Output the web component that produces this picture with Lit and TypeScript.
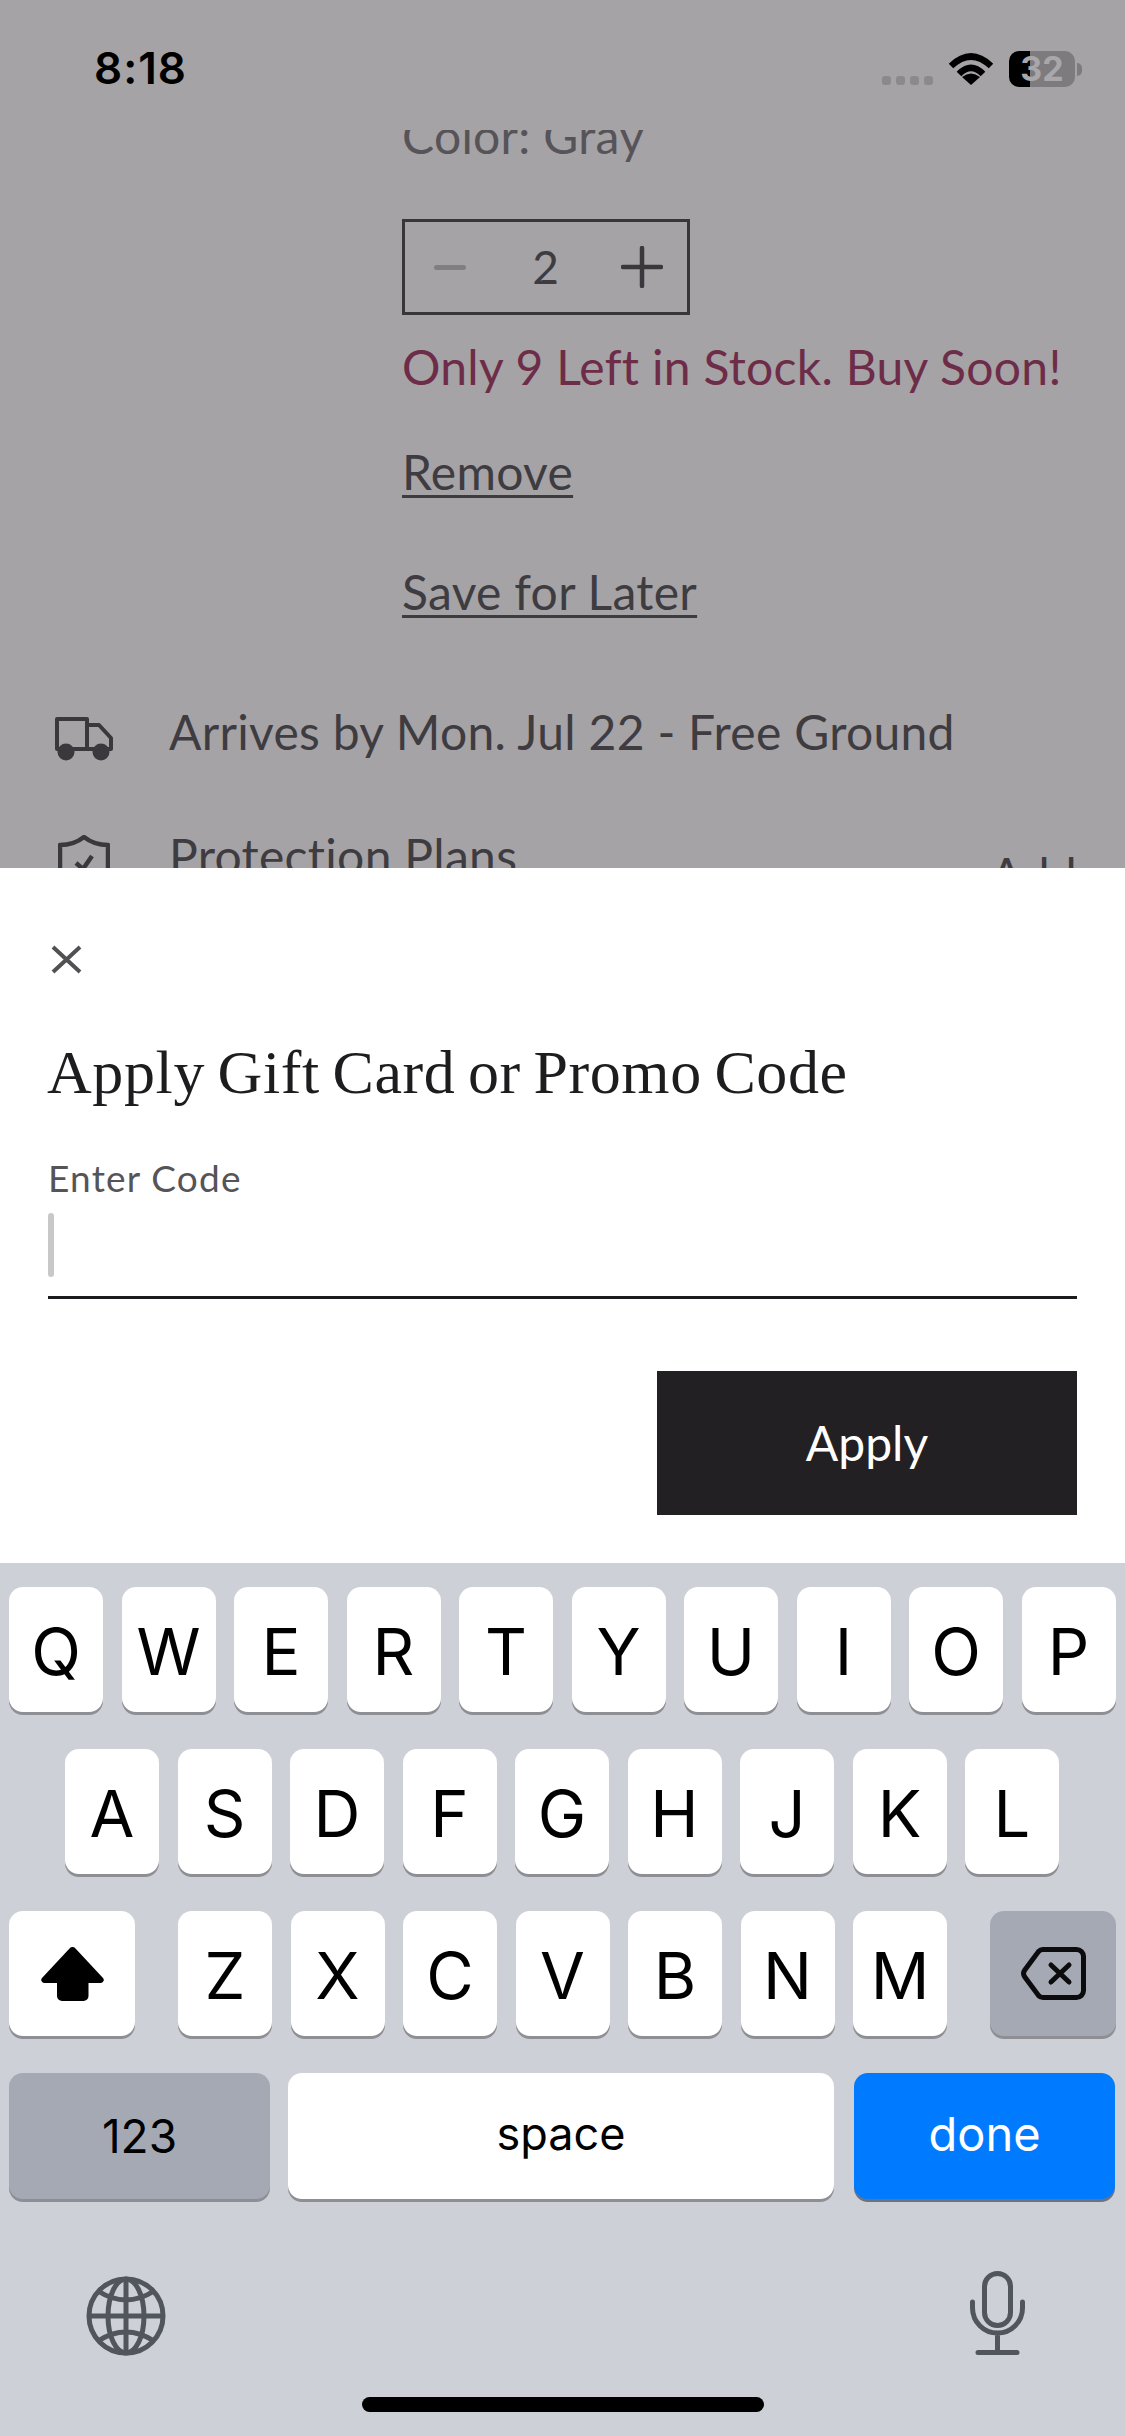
import {LitElement, html, css, svg} from 'lit';
import {customElement} from 'lit/decorators.js';

const ROW_1 = ['Q', 'W', 'E', 'R', 'T', 'Y', 'U', 'I', 'O', 'P'];
const ROW_2 = ['A', 'S', 'D', 'F', 'G', 'H', 'J', 'K', 'L'];
const ROW_3 = ['Z', 'X', 'C', 'V', 'B', 'N', 'M'];

const wifiIcon = svg`<path d="M3 14Q23 -5 43 14M11 22Q23 10 35 22" fill="none" stroke="#000" stroke-width="6.5"/><path d="M23 33L14 25Q23 18 32 25Z" fill="#000"/>`;
const truckIcon = svg`<path d="M2 2H32V32H2ZM32 8H44L56 21V32H32" fill="none" stroke="#3a383c" stroke-width="4" stroke-linejoin="round"/><circle cx="11" cy="35" r="8.500" fill="#3a383c"/><circle cx="46" cy="35" r="8.500" fill="#3a383c"/>`;
const shieldIcon = svg`<path d="M26 2Q16 10 2 10V34Q2 52 26 62Q50 52 50 34V10Q36 10 26 2Z" fill="none" stroke="#3a383c" stroke-width="4.500" stroke-linejoin="round"/><path d="M18 28L25 34L34 21" fill="none" stroke="#3a383c" stroke-width="4.500"/>`;
const closeIcon = svg`<path d="M2 2L29 27M29 2L2 27" stroke="#515053" stroke-width="4" fill="none"/>`;
const shiftIcon = svg`<path d="M31.5 0a4 4 0 0 1 3 1.4L62 31a3 3 0 0 1-2 5H47.500V49a5 5 0 0 1-5 5H21a5 5 0 0 1-5-5V36H3a3 3 0 0 1-2-5L28.500 1.400A4 4 0 0 1 31.500 0Z" fill="#000"/>`;
const backspaceIcon = svg`<path d="M22 2.500H55.500a7 7 0 0 1 7 7V43.500a7 7 0 0 1-7 7H22a6 6 0 0 1-4.500-2L3.800 30a6 6 0 0 1 0-7L17.500 4.500a6 6 0 0 1 4.500-2Z" fill="none" stroke="#0c0c0e" stroke-width="5"/><path d="M30 18L48 35M48 18L30 35" fill="none" stroke="#0c0c0e" stroke-width="5" stroke-linecap="round"/>`;
const globeIcon = svg`<g fill="none" stroke="#50565c" stroke-width="5"><circle cx="40" cy="40" r="37"/><ellipse cx="40" cy="40" rx="18" ry="37"/><path d="M40 3V77M3 40H77M12 15Q40 33 68 15M12 65Q40 47 68 65"/></g>`;
const micIcon = svg`<g fill="none" stroke="#50565c" stroke-width="5" stroke-linecap="round"><rect x="14.500" y="2.500" width="26" height="52" rx="13"/><path d="M2.500 31V37a25 25 0 0 0 50 0V31M27.500 62V81M8 81.500H47"/></g>`;

@customElement('app-root')
export class AppRoot extends LitElement {
  static override styles = css`
    :host {
      display: block;
      width: 1125px;
      height: 2436px;
      overflow: hidden;
      background: #fff;
      font-family: 'Lato', 'Liberation Sans', sans-serif;
    }

    /* dimmed page behind the sheet */
    .page {
      height: 868px;
      overflow: hidden;
      background: #a5a3a6;
      color: #3e3c40;
    }
    .status {
      height: 130px;
      display: flex;
      justify-content: space-between;
      padding: 0 43px 0 94px;
      box-sizing: border-box;
      font-family: 'Inter', sans-serif;
    }
    .time {
      margin-top: 42px;
      font-size: 44px;
      line-height: 53px;
      font-weight: 600;
      letter-spacing: 1px;
      color: #000;
    }
    .status-right {
      display: flex;
      align-items: flex-start;
    }
    .dots {
      display: flex;
      gap: 5px;
      margin: 76px 15px 0 0;
    }
    .dots i {
      width: 9px;
      height: 9px;
      border-radius: 3px;
      background: #8b898c;
    }
    .wifi {
      width: 46px;
      height: 33px;
      margin: 52px 15px 0 0;
    }
    .battery {
      width: 66px;
      height: 36px;
      margin-top: 51px;
      border-radius: 10px;
      background: linear-gradient(90deg, #000 21px, #7d7b7e 21px);
      color: #a9a7aa;
      font-size: 34px;
      font-weight: 700;
      line-height: 36px;
      text-align: center;
    }
    .nub {
      width: 5px;
      height: 13px;
      margin: 63px 0 0 2px;
      border-radius: 0 5px 5px 0;
      background: #7d7b7e;
    }

    .scroll {
      height: 738px;
      overflow: hidden;
    }
    .item {
      margin-top: -24px;
      padding-left: 402px;
    }
    .line {
      font-size: 48px;
      line-height: 60px;
      letter-spacing: 0.3px;
      white-space: nowrap;
    }
    .color {
      color: #565458;
    }
    .qty {
      width: 288px;
      height: 96px;
      margin-top: 53px;
      box-sizing: border-box;
      border: 3px solid #38363a;
      display: flex;
      align-items: center;
      justify-content: space-between;
      padding: 0 24px 0 29px;
    }
    .minus {
      width: 32px;
      height: 5px;
      border-radius: 3px;
      background: #807e81;
    }
    .plus {
      width: 42px;
      height: 42px;
    }
    .count {
      margin-left: 4px;
      font-size: 46px;
      line-height: 60px;
    }
    .stock {
      margin-top: 22px;
      color: #6d2c47;
    }
    .link {
      text-decoration: underline;
      text-decoration-thickness: 3px;
      text-underline-offset: 5px;
    }
    .remove {
      margin-top: 45px;
    }
    .later {
      margin-top: 60px;
    }
    .info {
      display: flex;
      padding: 0 48px 0 55px;
    }
    .arrives {
      margin-top: 80px;
    }
    .protection {
      margin-top: 64px;
    }
    .info-icon {
      width: 114px;
      flex: none;
    }
    .truck {
      display: block;
      width: 58px;
      height: 44px;
      margin-top: 15px;
    }
    .shield {
      display: block;
      width: 52px;
      height: 64px;
      margin: 9px 0 0 3px;
    }
    .add {
      margin: 19px 0 0 auto;
    }

    /* bottom sheet */
    .sheet {
      height: 695px;
      box-sizing: border-box;
      padding: 0 48px;
      background: #fff;
      display: flex;
      flex-direction: column;
    }
    .close {
      width: 31px;
      height: 29px;
      margin: 77px 0 0 3px;
      flex: none;
    }
    .title {
      margin: 63px 0 0 -1px;
      font-family: 'Liberation Serif', serif;
      font-size: 62px;
      font-weight: 400;
      line-height: 70px;
      letter-spacing: 0.6px;
      word-spacing: -3.500px;
      color: #1d1c1e;
      white-space: nowrap;
    }
    .label {
      margin-top: 49px;
      font-size: 37px;
      line-height: 44px;
      letter-spacing: 1.200px;
      color: #555457;
    }
    .field {
      margin-top: 13px;
      padding-bottom: 19px;
      border-bottom: 3px solid #1b1a1c;
    }
    .caret {
      width: 6px;
      height: 64px;
      border-radius: 3px;
      background: #c8c8c8;
    }
    .apply {
      align-self: flex-end;
      width: 420px;
      height: 144px;
      padding-bottom: 2px;
      margin-top: 72px;
      box-sizing: border-box;
      display: flex;
      align-items: center;
      justify-content: center;
      background: #222023;
      color: #fff;
      font-size: 48px;
    }

    /* system keyboard */
    .keyboard {
      height: 873px;
      box-sizing: border-box;
      padding-top: 24px;
      background: #cdd0d7;
      font-family: 'Inter', 'Liberation Sans', sans-serif;
      color: #000;
    }
    .row {
      display: flex;
      gap: 18.5px;
      height: 125px;
      margin-bottom: 37px;
      padding: 0 9px;
    }
    .row.home {
      padding-left: 65px;
    }
    .row.third {
      gap: 0;
      justify-content: space-between;
    }
    .letters {
      display: flex;
      gap: 18.5px;
    }
    .key {
      width: 94px;
      box-sizing: border-box;
      padding-top: 4px;
      display: flex;
      align-items: center;
      justify-content: center;
      border-radius: 14px;
      background: #fff;
      box-shadow: 0 3px 0 #8d8f94;
      font-size: 65px;
    }
    .key.wide {
      width: 126px;
      padding-top: 0;
    }
    .key.dark {
      background: #a5a9b4;
    }
    .row.bottom {
      height: 126px;
      gap: 18px;
      margin-bottom: 0;
    }
    .key.mode {
      width: 261px;
      font-size: 46px;
      padding-top: 0;
    }
    .key.space {
      width: 546px;
      font-size: 45px;
      padding: 0 0 6px;
    }
    .key.done {
      width: 261px;
      margin-left: 2px;
      padding: 0 0 6px;
      background: #007aff;
      box-shadow: 0 3px 0 #6b7280;
      color: #fff;
      font-size: 47px;
    }
    .shift {
      width: 63px;
      height: 54px;
    }
    .backspace {
      width: 65px;
      height: 53px;
    }
    .extras {
      display: flex;
      justify-content: space-between;
      margin-top: 72px;
      padding: 0 100px 0 86px;
    }
    .globe {
      width: 80px;
      height: 80px;
      margin-top: 5px;
    }
    .mic {
      width: 55px;
      height: 84px;
    }
    .indicator {
      width: 402px;
      height: 15px;
      margin: 41px auto 0;
      border-radius: 8px;
      background: #000;
    }
  `;

  private renderKey(label: string) {
    return html`<div class="key">${label}</div>`;
  }

  override render() {
    return html`
      <div class="page">
        <div class="status">
          <div class="time">8:18</div>
          <div class="status-right">
            <div class="dots"><i></i><i></i><i></i><i></i></div>
            <svg class="wifi" viewBox="0 0 46 33">${wifiIcon}</svg>
            <div class="battery">32</div>
            <div class="nub"></div>
          </div>
        </div>
        <div class="scroll">
          <div class="item">
            <div class="line color">Color: Gray</div>
            <div class="qty">
              <div class="minus"></div>
              <div class="count">2</div>
              <svg class="plus" viewBox="0 0 42 42">
                <path d="M21 2V40M2 21H40" stroke="#3a383c" stroke-width="4.500" stroke-linecap="round" fill="none" />
              </svg>
            </div>
            <div class="line stock">Only 9 Left in Stock. Buy Soon!</div>
            <div class="line remove"><span class="link">Remove</span></div>
            <div class="line later"><span class="link">Save for Later</span></div>
          </div>
          <div class="info arrives">
            <div class="info-icon">
              <svg class="truck" viewBox="0 0 58 44">${truckIcon}</svg>
            </div>
            <div class="line">Arrives by Mon. Jul 22 - Free Ground</div>
          </div>
          <div class="info protection">
            <div class="info-icon">
              <svg class="shield" viewBox="0 0 52 64">${shieldIcon}</svg>
            </div>
            <div class="line">Protection Plans</div>
            <div class="line add">Add</div>
          </div>
        </div>
      </div>

      <div class="sheet">
        <svg class="close" viewBox="0 0 31 29">${closeIcon}</svg>
        <h1 class="title">Apply Gift Card or Promo Code</h1>
        <div class="label">Enter Code</div>
        <div class="field"><div class="caret"></div></div>
        <div class="apply">Apply</div>
      </div>

      <div class="keyboard">
        <div class="row">${ROW_1.map((k) => this.renderKey(k))}</div>
        <div class="row home">${ROW_2.map((k) => this.renderKey(k))}</div>
        <div class="row third">
          <div class="key wide"><svg class="shift" viewBox="0 0 63 54">${shiftIcon}</svg></div>
          <div class="letters">${ROW_3.map((k) => this.renderKey(k))}</div>
          <div class="key wide dark"><svg class="backspace" viewBox="0 0 65 53">${backspaceIcon}</svg></div>
        </div>
        <div class="row bottom">
          <div class="key mode dark">123</div>
          <div class="key space">space</div>
          <div class="key done">done</div>
        </div>
        <div class="extras">
          <svg class="globe" viewBox="0 0 80 80">${globeIcon}</svg>
          <svg class="mic" viewBox="0 0 55 84">${micIcon}</svg>
        </div>
        <div class="indicator"></div>
      </div>
    `;
  }
}

declare global {
  interface HTMLElementTagNameMap {
    'app-root': AppRoot;
  }
}
